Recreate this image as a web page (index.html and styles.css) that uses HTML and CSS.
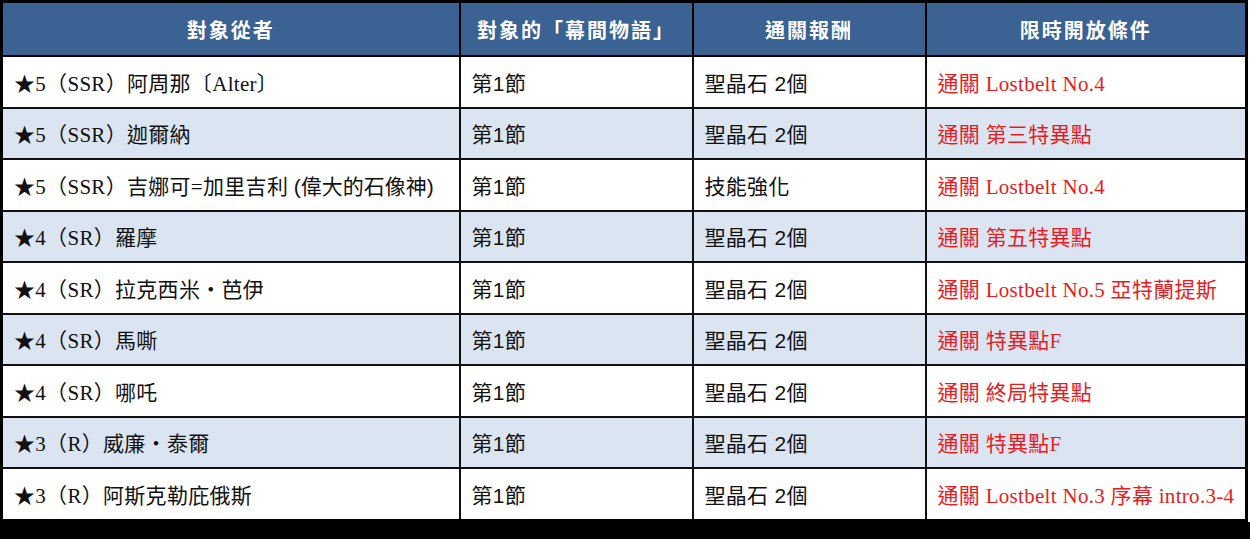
FILE: index.html
```html
<!DOCTYPE html>
<html lang="zh-Hant">
<head>
<meta charset="utf-8">
<title>幕間物語</title>
<link rel="stylesheet" href="styles.css">
</head>
<body>
<div class="page">
<table class="quest-table">
  <colgroup>
    <col class="c1"><col class="c2"><col class="c3"><col class="c4">
  </colgroup>
  <thead>
    <tr>
      <th>對象從者</th>
      <th>對象的「幕間物語」</th>
      <th>通關報酬</th>
      <th>限時開放條件</th>
    </tr>
  </thead>
  <tbody>
    <tr>
      <td>★5（SSR）阿周那〔Alter〕</td>
      <td class="sans">第1節</td>
      <td class="sans">聖晶石 2個</td>
      <td class="cond">通關 Lostbelt No.4</td>
    </tr>
    <tr class="alt">
      <td>★5（SSR）迦爾納</td>
      <td class="sans">第1節</td>
      <td class="sans">聖晶石 2個</td>
      <td class="cond">通關 第三特異點</td>
    </tr>
    <tr>
      <td>★5（SSR）吉娜可=加里吉利 <span class="sans">(偉大的石像神)</span></td>
      <td class="sans">第1節</td>
      <td class="sans">技能強化</td>
      <td class="cond">通關 Lostbelt No.4</td>
    </tr>
    <tr class="alt">
      <td>★4（SR）羅摩</td>
      <td class="sans">第1節</td>
      <td class="sans">聖晶石 2個</td>
      <td class="cond">通關 第五特異點</td>
    </tr>
    <tr>
      <td>★4（SR）拉克西米・芭伊</td>
      <td class="sans">第1節</td>
      <td class="sans">聖晶石 2個</td>
      <td class="cond">通關 Lostbelt No.5 亞特蘭提斯</td>
    </tr>
    <tr class="alt">
      <td>★4（SR）馬嘶</td>
      <td class="sans">第1節</td>
      <td class="sans">聖晶石 2個</td>
      <td class="cond">通關 特異點F</td>
    </tr>
    <tr>
      <td>★4（SR）哪吒</td>
      <td class="sans">第1節</td>
      <td class="sans">聖晶石 2個</td>
      <td class="cond">通關 終局特異點</td>
    </tr>
    <tr class="alt">
      <td>★3（R）威廉・泰爾</td>
      <td class="sans">第1節</td>
      <td class="sans">聖晶石 2個</td>
      <td class="cond">通關 特異點F</td>
    </tr>
    <tr>
      <td>★3（R）阿斯克勒庇俄斯</td>
      <td class="sans">第1節</td>
      <td class="sans">聖晶石 2個</td>
      <td class="cond">通關 Lostbelt No.3 序幕 intro.3-4</td>
    </tr>
  </tbody>
</table>
<div class="bottom-band"></div>
</div>
</body>
</html>
```

FILE: styles.css
```css
html, body {
  margin: 0;
  padding: 0;
  background: #ffffff;
}

.page {
  width: 1250px;
  height: 539px;
  display: flex;
  flex-direction: column;
  overflow: hidden;
}

.quest-table {
  width: 1248px;
  border-collapse: collapse;
  border: 3px solid #000;
  table-layout: fixed;
  font-family: "Liberation Serif", "Noto Sans CJK TC", serif;
  font-size: 21px;
  color: #111;
}

.c1 { width: 458px; }
.c2 { width: 233px; }
.c3 { width: 233px; }
.c4 { width: 321px; }

.quest-table th {
  background: #3a6292;
  color: #ffffff;
  font-family: "Noto Sans CJK TC", sans-serif;
  font-weight: 700;
  font-size: 20px;
  letter-spacing: 2px;
  height: 52px;
  padding: 0;
  text-align: center;
  border: 2px solid #000;
}

.quest-table td {
  height: 49.5px;
  padding: 0 0 0 11px;
  border: 2px solid #111;
  white-space: nowrap;
  letter-spacing: 0.3px;
}

.quest-table tr.alt td {
  background: #dbe5f1;
}

.sans {
  font-family: "Liberation Sans", "Noto Sans CJK TC", sans-serif;
  letter-spacing: 0;
}

.cond {
  color: #e61c1f;
}

.bottom-band {
  flex: 1;
  background: #000;
}
```
